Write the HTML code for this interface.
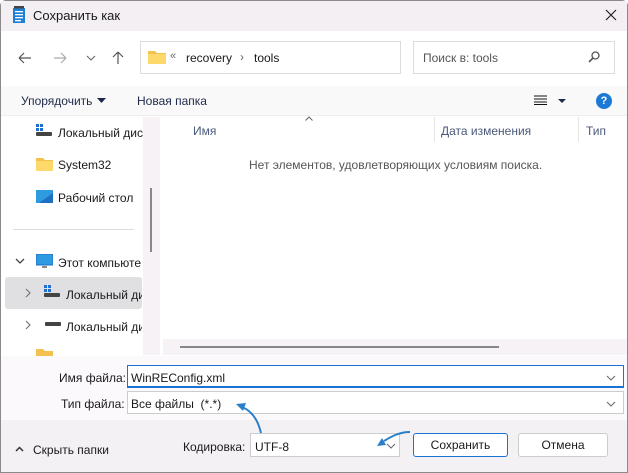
<!DOCTYPE html>
<html><head><meta charset="utf-8"><style>
*{margin:0;padding:0;box-sizing:border-box}
body{width:628px;height:473px;overflow:hidden;background:#fff;font-family:"Liberation Sans",sans-serif;font-size:12px;color:#1a1a1a;position:relative}
.a{position:absolute}
.t{position:absolute;white-space:nowrap}
</style></head><body>
<div class="a" style="left:0;top:0;width:628px;height:473px;border:1px solid #8a8a8a;border-radius:6px 6px 0 0;background:#fff"></div>
<div class="a" style="left:1px;top:1px;width:626px;height:30px;background:#f3eff3"></div>
<svg class="a" style="left:12px;top:6px" width="14" height="18" viewBox="0 0 14 18"><rect x="1" y="2" width="12" height="15" fill="#1e7fd6"/><rect x="3" y="5" width="8" height="1.3" fill="#fff"/><rect x="3" y="8" width="8" height="1.3" fill="#fff"/><rect x="3" y="11" width="8" height="1.3" fill="#fff"/><rect x="3" y="14" width="6" height="1.3" fill="#fff"/><rect x="2" y="0" width="10" height="2.5" fill="#444"/></svg>
<div class="t" style="left:33px;top:8px;font-size:13px">Сохранить как</div>
<svg class="a" style="left:605px;top:9px" width="12" height="12"><path d="M1 1l10 10M11 1L1 11" stroke="#222" stroke-width="1.2"/></svg>
<svg class="a" style="left:14px;top:48px" width="110" height="20" viewBox="0 0 110 20"><path d="M5 10h12M5 10l5-5M5 10l5 5" stroke="#555" stroke-width="1.2" fill="none"/><path d="M40 10h12M52 10l-5-5M52 10l-5 5" stroke="#aaa" stroke-width="1.2" fill="none"/><path d="M73 8l4 4 4-4" stroke="#666" stroke-width="1.1" fill="none"/><path d="M104 4v12M104 4l-5 5M104 4l5 5" stroke="#555" stroke-width="1.2" fill="none"/></svg>
<div class="a" style="left:140px;top:41px;width:261px;height:33px;border:1px solid #dcdcdc;background:#fff"></div>
<svg class="a" style="left:148px;top:50px" width="18" height="14"><path d="M0 1h7l2 2h9v11H0z" fill="#f2c14e"/><rect x="0" y="4" width="18" height="10" fill="#fcd96a"/></svg>
<div class="t" style="left:170px;top:50px;color:#666;font-size:11px">«</div>
<div class="t" style="left:186px;top:51px">recovery</div>
<div class="t" style="left:240px;top:50px;color:#666">›</div>
<div class="t" style="left:254px;top:51px">tools</div>
<div class="a" style="left:413px;top:41px;width:202px;height:33px;border:1px solid #dcdcdc;background:#fff"></div>
<div class="t" style="left:423px;top:51px;color:#555">Поиск в: tools</div>
<svg class="a" style="left:588px;top:51px" width="12" height="12"><circle cx="7.5" cy="4.5" r="3.5" stroke="#555" stroke-width="1.3" fill="none"/><path d="M5 7L1 11" stroke="#555" stroke-width="1.6"/></svg>
<div class="a" style="left:1px;top:86px;width:626px;height:30px;background:#f9f9f9;border-bottom:1px solid #eee"></div>
<div class="t" style="left:21px;top:94px;color:#1f2a4a">Упорядочить</div>
<svg class="a" style="left:97px;top:98px" width="9" height="5"><path d="M0 0h9L4.5 5z" fill="#1f2a4a"/></svg>
<div class="t" style="left:137px;top:94px;color:#1f2a4a">Новая папка</div>
<svg class="a" style="left:534px;top:95px" width="14" height="10"><path d="M0 1h13M0 4h13M0 7h13M0 9.5h13" stroke="#111" stroke-width="1"/></svg>
<svg class="a" style="left:558px;top:99px" width="8" height="4"><path d="M0 0h8L4 4z" fill="#1f2a4a"/></svg>
<div class="a" style="left:596px;top:93px;width:16px;height:16px;border-radius:50%;background:#1b7ad6;color:#fff;font-size:11px;font-weight:bold;text-align:center;line-height:16px">?</div>
<svg class="a" style="left:36px;top:124px" width="16" height="12"><rect x="0" y="0" width="3" height="3" fill="#1e6fd0"/><rect x="4" y="0" width="3" height="3" fill="#1e6fd0"/><rect x="0" y="4" width="3" height="3" fill="#1e6fd0"/><rect x="4" y="4" width="3" height="3" fill="#1e6fd0"/><rect x="0" y="8" width="16" height="4" rx="1" fill="#444"/></svg>
<div class="t" style="left:58px;top:126px">Локальный дис</div>
<svg class="a" style="left:36px;top:157px" width="17" height="14"><path d="M0 1h7l2 2h8v11H0z" fill="#f2c14e"/><rect x="0" y="4" width="17" height="10" fill="#fcd96a"/></svg>
<div class="t" style="left:58px;top:158px">System32</div>
<svg class="a" style="left:36px;top:190px" width="17" height="13"><rect width="17" height="13" fill="#2e9be0"/><path d="M17 3L3 13h14z" fill="#1d6fc4"/></svg>
<div class="t" style="left:58px;top:191px">Рабочий стол</div>
<div class="a" style="left:13px;top:229px;width:121px;height:1px;background:#ddd"></div>
<svg class="a" style="left:15px;top:258px" width="10" height="6"><path d="M1 1l4 4 4-4" stroke="#444" stroke-width="1.3" fill="none"/></svg>
<svg class="a" style="left:36px;top:254px" width="17" height="15"><rect x="0" y="0" width="17" height="11" fill="#2e9be0" stroke="#1d6fc4"/><rect x="6" y="12" width="5" height="2" fill="#888"/></svg>
<div class="t" style="left:58px;top:256px">Этот компьюте</div>
<div class="a" style="left:5px;top:277px;width:137px;height:32px;background:#e0e0e3;border-radius:3px"></div>
<svg class="a" style="left:25px;top:288px" width="6" height="10"><path d="M1 1l4 4-4 4" stroke="#777" stroke-width="1.2" fill="none"/></svg>
<svg class="a" style="left:44px;top:285px" width="16" height="12"><rect x="0" y="0" width="3" height="3" fill="#1e6fd0"/><rect x="4" y="0" width="3" height="3" fill="#1e6fd0"/><rect x="0" y="4" width="3" height="3" fill="#1e6fd0"/><rect x="4" y="4" width="3" height="3" fill="#1e6fd0"/><rect x="0" y="8" width="16" height="4" rx="1" fill="#444"/></svg>
<div class="t" style="left:66px;top:288px;width:76px;overflow:hidden">Локальный ди</div>
<svg class="a" style="left:25px;top:320px" width="6" height="10"><path d="M1 1l4 4-4 4" stroke="#777" stroke-width="1.2" fill="none"/></svg>
<svg class="a" style="left:45px;top:322px" width="16" height="5"><rect width="16" height="4" rx="1" fill="#444"/></svg>
<div class="t" style="left:66px;top:320px;width:76px;overflow:hidden">Локальный ди</div>
<svg class="a" style="left:36px;top:348px" width="17" height="8"><path d="M0 1h7l2 2h8v5H0z" fill="#f2c14e"/></svg>
<div class="a" style="left:143px;top:117px;width:17px;height:238px;background:#f6f2f6"></div>
<div class="a" style="left:150px;top:188px;width:2px;height:64px;background:#888"></div>
<svg class="a" style="left:305px;top:116px" width="8" height="5"><path d="M0.5 4.5l3.5-3.5 3.5 3.5" stroke="#666" fill="none"/></svg>
<div class="t" style="left:193px;top:124px;color:#4a5a7a">Имя</div>
<div class="a" style="left:434px;top:117px;width:1px;height:25px;background:#e5e5e5"></div>
<div class="t" style="left:441px;top:124px;color:#4a5a7a">Дата изменения</div>
<div class="a" style="left:578px;top:117px;width:1px;height:25px;background:#e5e5e5"></div>
<div class="t" style="left:586px;top:124px;color:#4a5a7a">Тип</div>
<div class="t" style="left:249px;top:158px;color:#555">Нет элементов, удовлетворяющих условиям поиска.</div>
<div class="a" style="left:163px;top:339px;width:464px;height:16px;background:#f6f2f6"></div>
<div class="a" style="left:180px;top:346px;width:319px;height:2px;background:#888"></div>
<div class="a" style="left:1px;top:356px;width:626px;height:64px;background:#fcf9fc"></div>
<div class="a" style="left:1px;top:420px;width:626px;height:52px;background:#f3f1f3"></div>
<div class="t" style="left:59px;top:371px">Имя файла:</div>
<div class="a" style="left:127px;top:365px;width:497px;height:23px;border:1px solid #1a73d0;background:#fff;border-bottom:2px solid #1a73d0"></div>
<div class="t" style="left:131px;top:371px">WinREConfig.xml</div>
<svg class="a" style="left:606px;top:375px" width="10" height="6"><path d="M1 1l4 4 4-4" stroke="#666" fill="none"/></svg>
<div class="t" style="left:61px;top:397px">Тип файла:</div>
<div class="a" style="left:127px;top:391px;width:497px;height:23px;border:1px solid #ccc;background:#fff"></div>
<div class="t" style="left:131px;top:397px">Все файлы&nbsp; (*.*)</div>
<svg class="a" style="left:606px;top:401px" width="10" height="6"><path d="M1 1l4 4 4-4" stroke="#666" fill="none"/></svg>
<svg class="a" style="left:15px;top:446px" width="9" height="6"><path d="M1 5l3.5-3.5 3.5 3.5" stroke="#333" stroke-width="1.5" fill="none"/></svg>
<div class="t" style="left:33px;top:443px">Скрыть папки</div>
<div class="t" style="left:183px;top:440px">Кодировка:</div>
<div class="a" style="left:250px;top:433px;width:150px;height:24px;border:1px solid #ccc;background:#fff"></div>
<div class="t" style="left:255px;top:440px">UTF-8</div>
<svg class="a" style="left:386px;top:443px" width="10" height="6"><path d="M1 1l4 4 4-4" stroke="#666" fill="none"/></svg>
<div class="a" style="left:413px;top:433px;width:95px;height:24px;border:1px solid #1a73d0;border-radius:3px;background:#fff;text-align:center;line-height:22px">Сохранить</div>
<div class="a" style="left:518px;top:433px;width:90px;height:24px;border:1px solid #ccc;border-radius:3px;background:#fff;text-align:center;line-height:22px">Отмена</div>
<svg class="a" style="left:0;top:0" width="628" height="473"><path d="M261 433C258 420 252 411 242 407" stroke="#2a7fc8" stroke-width="2" fill="none"/><path d="M236 404l10 -1-3 8z" fill="#2a7fc8"/><path d="M410 432C400 432 392 436 384 441" stroke="#2a7fc8" stroke-width="2" fill="none"/><path d="M377 446l5-8 4 7z" fill="#2a7fc8"/></svg>
</body></html>
